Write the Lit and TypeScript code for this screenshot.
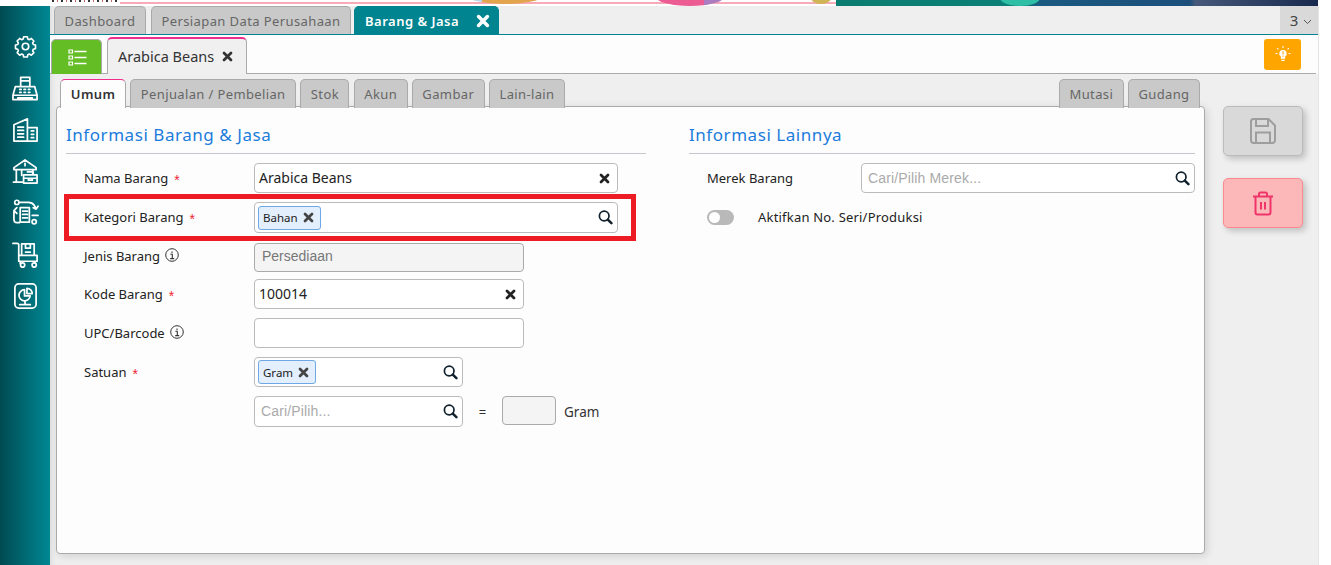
import { LitElement, html, css, svg } from "lit";
import { customElement } from "lit/decorators.js";

const xIcon = (size = 11) => html`<svg class="x" width=${size} height=${size} viewBox="0 0 12 12"><path d="M2.2 2.2 9.8 9.8M9.8 2.2 2.2 9.8" fill="none" stroke="currentColor" stroke-width="3" stroke-linecap="round"/></svg>`;
const search = html`<svg class="ico" width="15" height="15" viewBox="0 0 15 15"><circle cx="6.2" cy="6" r="4.800" fill="none" stroke="#10202c" stroke-width="1.700"/><path d="M9.800 9.600l3.600 3.600" stroke="#10202c" stroke-width="2.500" stroke-linecap="round"/></svg>`;
const info = html`<svg class="info" width="14" height="14" viewBox="0 0 14 14"><circle cx="7" cy="7" r="6.300" fill="none" stroke="#333" stroke-width="1"/><path d="M5.400 6.200H7.300V10.600M5.200 10.600H9.200M7 3.400v1.500" fill="none" stroke="#333" stroke-width="1.100"/></svg>`;
const star = html`<span class="star">*</span>`;

const navIcons = [
  svg`<g transform="translate(14 14) scale(.78) translate(-15 -13)" stroke-width="2.200"><path d="M10.600 2h4.800l.7 3 2 .9 2.700-1.600 3.300 3.400-1.600 2.600.8 2 3 .8v4.700l-3 .8-.8 2 1.600 2.600-3.300 3.400-2.700-1.600-2 .9-.7 3h-4.800l-.7-3-2-.9-2.700 1.600-3.300-3.400 1.600-2.600-.8-2-3-.8v-4.700l3-.8.8-2-1.600-2.600 3.300-3.400 2.700 1.600 2-.9z" transform="translate(2 -2)"/><circle cx="15" cy="13" r="4.300"/></g>`,
  svg`<path d="M9 12V2.500h9.500V12M3.500 12h20l2.500 9v4.500H1V21zM1 21h25M6 25.500v-1.800h15v1.800M9 6h9.500M8 15h1.500M12.500 15H14M17 15h1.500M8 18h1.500M12.500 18H14M17 18h1.500"/>`,
  svg`<path d="M2 26V9l14-6v23M2 26h24V12h-10M6 11.500h6M6 15h6M6 18.500h6M6 22h6M20 15.500h2.500M20 19h2.500M20 22.500h2.500" />`,
  svg`<path d="M2 10 13.500 2 25 10v2H2zM13.500 5.500v2.500M4.500 12v12M1.500 25h9M10 12v6M21.500 12v5M12 17.500h14v8.500H12zM12 21h14M17 21v2h4v-2M16 14.500h6v3"/>`,
  svg`<circle cx="23" cy="23.500" r="2.200"/><circle cx="5" cy="3.500" r="2.200"/><path d="M8 3.500h9c3 0 5 1.500 6 3l2 3.500M27 7.500 25 10.500l-3-1.500M8.500 9h9.500v15H8.500zM11 12.500h5M11 16h5M11 19.500h5M21 17h6M5 9 2 12l3 3M2 13v8c0 2 1 3.500 3 3.500h2.500"/>`,
  svg`<path d="M1 2.500h4.500c1 0 1.500.5 1.500 1.500v17h19M10 3h13v12H10zM14 3v4.500h5V3M14 11.500h5M8 15h18v6M8.500 21v2M24 21v2"/><circle cx="11" cy="25" r="2.200"/><circle cx="23" cy="25" r="2.200"/>`,
  svg`<rect x="3" y="2" width="22" height="25" rx="4"/><path d="M8 23.500h11M13.500 19.500v4"/><path d="M13 8a5.800 5.800 0 1 0 5.800 6.500H13z"/><path d="M15.500 6.500a5.500 5.500 0 0 1 5.500 5.500h-5.500z"/>`,
];

@customElement("app-root")
export class AppRoot extends LitElement {
  static styles = css`
    :host { display: block; width: 1331px; height: 565px; overflow: hidden; background: #fff; font-family: "Noto Sans", sans-serif; color: #222; font-size: 13px; }
    * { box-sizing: border-box; }
    .strip { height: 6px; position: relative; overflow: hidden; width: 1318px; background: linear-gradient(90deg, #fff 0, #fff 836px, #0b7d70 836px, #0c7f77 1020px, #1b5a80 1040px, #1c4f7c 1190px, #46597a 1195px, #18294d 1318px); }
    .pink { position: absolute; left: 120px; width: 716px; top: 2px; height: 2px; background: #f7aab8; }
    .blob { position: absolute; border-radius: 50%; }
    .b1 { left: 466px; top: -14px; width: 78px; height: 18px; background: linear-gradient(90deg, #b9d8ee 0, #b9d8ee 16px, #e2a54e 16px); }
    .b2 { left: 655px; top: -14px; width: 70px; height: 20px; background: linear-gradient(90deg, #ec5b92 70%, #ab7cc0 70%); }
    .b3 { left: 810px; top: -12px; width: 22px; height: 16px; background: #d0b554; }
    .b4 { left: 1000px; top: -10px; width: 40px; height: 16px; background: #2ebfa6; }
    .crumbs { position: absolute; left: 52px; top: 0; width: 68px; height: 2px; background: repeating-linear-gradient(90deg, #333 0 2px, #fff 2px 5px, #c66 5px 6px, #fff 6px 9px); }
    .body { display: flex; height: 559px; }
    .side { width: 50px; flex: none; background: linear-gradient(90deg, #004a52, #008893); display: flex; flex-direction: column; align-items: center; gap: 14.500px; padding-top: 27px; }
    .side svg { fill: none; stroke: #fff; stroke-width: 1.800; stroke-linejoin: round; stroke-linecap: round; display: block; }
    .main { width: 1268px; flex: none; background: #efefef; display: flex; flex-direction: column; box-shadow: inset 5px 0 5px -3px #ddd; }
    .gutter { flex: 1; border-left: 1px solid #e4e4e4; }
    .tabs { height: 29px; display: flex; padding-left: 4px; border-bottom: 1px solid #00848f; position: relative; }
    .tab { height: 28px; display: flex; align-items: center; background: #c9c9c9; border: 1px solid #aaa; border-bottom: 0; border-radius: 5px 5px 0 0; color: #666; letter-spacing: .4px; padding: 0 9.500px; margin-right: 5px; white-space: nowrap; }
    .tab.on { background: #00848f; border-color: #00848f; color: #fff; font-weight: 600; letter-spacing: .5px; margin-left: -2px; padding: 0 8px 0 10px; }
    .tab.on .x { margin-left: 17px; }
    .more { margin-left: auto; width: 38px; height: 28px; background: #d9d9d9; display: flex; align-items: center; justify-content: center; gap: 5px; font-size: 15px; color: #444; padding-left: 4px; }
    .more svg { margin-top: 3px; }
    .bar { height: 39px; background: #fdfdfd; border-bottom: 1px solid #aaa; display: flex; align-items: flex-end; padding: 0 15px 0 1px; margin-right: 2px; box-shadow: 2px 0 0 #fdfdfd; position: relative; }
    .green { width: 51px; height: 35px; background: #64bd24; border: 1px solid #aaa; border-bottom: 0; border-radius: 5px 5px 0 0; display: flex; align-items: center; justify-content: center; margin-bottom: -1px; padding-left: 2px; }
    .open { width: 140px; height: 37px; margin-left: 5px; margin-bottom: -1px; background: #f0f0f0; border: 1px solid #aaa; border-top: 2px solid #ef2d8d; border-bottom: 0; border-radius: 5px 5px 0 0; display: flex; align-items: center; padding: 0 0 2px 10px; font-size: 14.500px; color: #333; white-space: nowrap; }
    .open .x { margin-left: 8px; margin-top: 1px; }
    .lamp { margin-left: auto; width: 37px; height: 31px; margin-bottom: 3px; background: #ffa500; border-radius: 3px; display: flex; align-items: center; justify-content: center; }
    .work { flex: 1; display: flex; padding: 5px 0 0 6px; }
    .col { width: 1149px; display: flex; flex-direction: column; }
    .subtabs { display: flex; gap: 4.300px; padding: 0 5px 0 4px; height: 27px; position: relative; z-index: 1; }
    .subtabs .tab { margin: 0; padding: 0 9.500px; height: 29px; letter-spacing: .37px; }
    .subtabs .tab.um { background: #fdfdfd; color: #333; font-weight: 600; border-top: 1px solid #ef2d8d; border-bottom: 0; height: 29px; padding: 0 9.800px; }
    .subtabs .sp { flex: 1; }
    .panel { height: 448px; background: #fdfdfd; border: 1px solid #aaa; border-radius: 4px; box-shadow: 2px 2px 8px rgba(0,0,0,.13); padding: 16px 9px 0; display: flex; gap: 43px; }
    .left { width: 580px; flex: none; position: relative; }
    .right { flex: 1; }
    h2 { margin: 0 0 9px; font-weight: 400; font-size: 17px; line-height: 24px; letter-spacing: .55px; color: #1b7cdc; border-bottom: 1px solid #c6c8ce; height: 31px; }
    .rows { display: flex; flex-direction: column; gap: 9px; padding-left: 18px; }
    .row { display: flex; align-items: center; min-height: 30px; }
    .lab { width: 170px; flex: none; display: flex; align-items: center; gap: 6px; font-size: 13px; color: #222; padding-bottom: 1px; }
    .right .lab { width: 154px; }
    .star { color: #ee2233; font-family: "Liberation Sans", sans-serif; font-size: 14px; padding-top: 4px; }
    .lab .info { margin-left: -1px; margin-bottom: 2px; }
    .inp { height: 30px; background: #fff; border: 1px solid #bbb; border-radius: 4px; display: flex; align-items: center; padding: 0 4px 1px 4px; color: #222; font-size: 14px; gap: 4px; }
    .inp .sp { flex: 1; }
    .inp .x { color: #222; margin: 1px 3px 0 0; }
    .inp .ico { margin-top: 1px; }
    .w1 { width: 364px; } .w2 { width: 270px; } .w3 { width: 209px; } .w4 { width: 334px; }
    .h31 { height: 31px; }
    .h29 { height: 29px; margin-bottom: -1px; }
    .row.sub { margin-bottom: -1px; min-height: 29px; }
    .dis { background: #f4f4f4; color: #777; font-family: "Liberation Sans", sans-serif; padding: 0 4px 2px 7px; border-color: #aaa; }
    .ph { color: #aaa; font-family: "Liberation Sans", sans-serif; padding-left: 2px; letter-spacing: .15px; }
    .chip { height: 24px; display: inline-flex; align-items: center; gap: 5px; background: #e3effc; border: 1px solid #6fa8e6; border-radius: 3px; padding: 0 6px 0 4px; font-size: 11.500px; color: #222; margin: 1px 0 0 -1px; white-space: nowrap; }
    .inp .chip .x { color: #444; margin: 0; }
    .eq { width: 39px; text-align: center; color: #333; }
    .box { width: 54px; height: 29px; background: #f4f4f4; border: 1px solid #aaa; border-radius: 4px; align-self: flex-start; }
    .unit { margin-left: 8px; color: #333; font-size: 13.500px; }
    .frame { position: absolute; left: -2px; top: 71px; width: 572px; height: 47px; border: 5px solid #ed1c24; pointer-events: none; }
    .toggle { width: 27px; height: 15px; border-radius: 8px; background: #b9b9b9; padding: 2px; flex: none; }
    .knob { width: 11px; height: 11px; border-radius: 50%; background: #fff; }
    .tg { gap: 24px; letter-spacing: .2px; }
    .acts { margin-left: 18px; padding-top: 27px; display: flex; flex-direction: column; gap: 22px; }
    .act { width: 80px; height: 50px; border-radius: 5px; display: flex; align-items: center; justify-content: center; box-shadow: 3px 3px 6px rgba(0,0,0,.2); border: 1px solid #bbb; background: #d9d9d9; }
    .act.del { background: #fcb8b8; border-color: #fb8a8f; }
  `;

  private tagInput(label: string, width: string, extra = "") {
    return html`<div class="inp ${width} ${extra}"><span class="chip">${label} ${xIcon(11)}</span><span class="sp"></span>${search}</div>`;
  }

  render() {
    return html`
      <div class="strip">
        <div class="crumbs"></div><div class="pink"></div>
        <div class="blob b1"></div><div class="blob b2"></div><div class="blob b3"></div><div class="blob b4"></div>
      </div>
      <div class="body">
        <nav class="side">${navIcons.map((p) => html`<svg width="27" height="27" viewBox="0 0 28 28">${p}</svg>`)}</nav>
        <div class="main">
          <div class="tabs">
            <div class="tab">Dashboard</div>
            <div class="tab">Persiapan Data Perusahaan</div>
            <div class="tab on">Barang &amp; Jasa ${xIcon(14)}</div>
            <div class="more">3 <svg width="9" height="6" viewBox="0 0 9 6"><path d="M1 1l3.500 3.500L8 1" fill="none" stroke="#555" stroke-width="1"/></svg></div>
          </div>
          <div class="bar">
            <div class="green"><svg width="19" height="17" viewBox="0 0 19 17"><path d="M6.500 2.500H18.500M6.500 8.500H18.500M6.500 14.500H18.500" stroke="#fff" stroke-width="1.500"/><path d="M1 1h3.500v3H1zM1 7h3.500v3H1zM1 13h3.500v3H1z" fill="none" stroke="#fff" stroke-width="1.200"/></svg></div>
            <div class="open">Arabica Beans ${xIcon(11)}</div>
            <div class="lamp"><svg width="16" height="17" viewBox="0 0 14 16"><path d="M7 3.500a3.500 3.500 0 0 0-2 6.400V12h4V9.900A3.500 3.500 0 0 0 7 3.500z" fill="#fff"/><path d="M5.500 13.500h3M7 0v1.800M1.500 2l1.200 1.200M12.500 2l-1.200 1.200M0 7h1.700M12.300 7H14" stroke="#fff" stroke-width="1"/><path d="M7 5v3M7 9v1" stroke="#ffa500" stroke-width="1"/></svg></div>
          </div>
          <div class="work">
            <div class="col">
              <div class="subtabs">
                <div class="tab um">Umum</div>
                <div class="tab">Penjualan / Pembelian</div>
                <div class="tab">Stok</div>
                <div class="tab">Akun</div>
                <div class="tab">Gambar</div>
                <div class="tab">Lain-lain</div>
                <div class="sp"></div>
                <div class="tab">Mutasi</div>
                <div class="tab">Gudang</div>
              </div>
              <div class="panel">
                <section class="left">
                  <h2>Informasi Barang &amp; Jasa</h2>
                  <div class="rows">
                    <div class="row"><div class="lab">Nama Barang ${star}</div><div class="inp w1">Arabica Beans<span class="sp"></span>${xIcon(11)}</div></div>
                    <div class="row"><div class="lab">Kategori Barang ${star}</div>${this.tagInput("Bahan", "w1", "h31")}</div>
                    <div class="row sub"><div class="lab">Jenis Barang ${info}</div><div class="inp w2 h29 dis">Persediaan</div></div>
                    <div class="row"><div class="lab">Kode Barang ${star}</div><div class="inp w2">100014<span class="sp"></span>${xIcon(11)}</div></div>
                    <div class="row"><div class="lab">UPC/Barcode ${info}</div><div class="inp w2"></div></div>
                    <div class="row"><div class="lab">Satuan ${star}</div>${this.tagInput("Gram", "w3")}</div>
                    <div class="row"><div class="lab"></div><div class="inp w3 h31"><span class="ph">Cari/Pilih...</span><span class="sp"></span>${search}</div><div class="eq">=</div><div class="box"></div><div class="unit">Gram</div></div>
                  </div>
                  <div class="frame"></div>
                </section>
                <section class="right">
                  <h2>Informasi Lainnya</h2>
                  <div class="rows">
                    <div class="row"><div class="lab">Merek Barang</div><div class="inp w4"><span class="ph">Cari/Pilih Merek...</span><span class="sp"></span>${search}</div></div>
                    <div class="row tg"><div class="toggle"><div class="knob"></div></div><div>Aktifkan No. Seri/Produksi</div></div>
                  </div>
                </section>
              </div>
            </div>
            <div class="acts">
              <div class="act"><svg width="28" height="28" viewBox="0 0 28 28"><path d="M2 4.500A2.500 2.500 0 0 1 4.500 2h15L26 8.500v15a2.500 2.500 0 0 1-2.500 2.500h-19A2.500 2.500 0 0 1 2 23.500zM7 2v7h12V2M7 26V15.500h14V26" fill="none" stroke="#9e9e9e" stroke-width="2"/></svg></div>
              <div class="act del"><svg width="22" height="25" viewBox="0 0 22 25"><path d="M1 5.500h20M7 5V3a1.500 1.500 0 0 1 1.500-1.500h5A1.500 1.500 0 0 1 15 3v2M3.500 6v15.500A2 2 0 0 0 5.500 23.500h11a2 2 0 0 0 2-2V6" fill="none" stroke="#ee3468" stroke-width="2"/><path d="M9 11v7.500M13 11v7.500" stroke="#ee3468" stroke-width="2"/></svg></div>
            </div>
          </div>
        </div>
        <div class="gutter"></div>
      </div>
    `;
  }
}
